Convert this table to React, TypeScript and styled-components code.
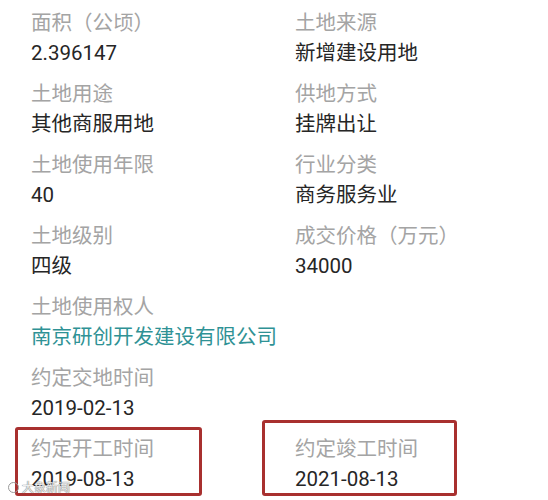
import React from 'react';
import styled, { createGlobalStyle } from 'styled-components';

const GlobalStyle = createGlobalStyle`
  body {
    margin: 0;
    background: #fff;
    font-family: Roboto, "Noto Sans CJK SC", sans-serif;
  }
`;

const Page = styled.div`
  position: relative;
  width: 548px;
  height: 500px;
  overflow: hidden;
  background: #fff;
  padding: 8.5px 0 0 31px;
  box-sizing: border-box;
`;

const Grid = styled.div`
  display: grid;
  grid-template-columns: 264px 1fr;
  row-gap: 12px;
`;

const Item = styled.div<{ $full?: boolean }>`
  position: relative;
  grid-column: ${(p) => (p.$full ? '1 / -1' : 'auto')};
`;

const Label = styled.div`
  font-size: 20.5px;
  line-height: 29px;
  color: #a4a4a4;
  white-space: nowrap;
`;

const Value = styled.div<{ $link?: boolean }>`
  font-size: 20.5px;
  line-height: 30px;
  color: ${(p) => (p.$link ? '#2f9295' : '#262626')};
  white-space: nowrap;
`;

// hand drawn red highlight boxes in the screenshot
const Highlight = styled.div<{ $left: number; $top: number; $width: number }>`
  position: absolute;
  left: ${(p) => p.$left}px;
  top: ${(p) => p.$top}px;
  width: ${(p) => p.$width}px;
  bottom: -2px;
  border: 3px solid #a8302f;
  border-radius: 3px;
  box-sizing: border-box;
  pointer-events: none;
`;

const Watermark = styled.div`
  position: absolute;
  left: 8px;
  bottom: 6px;
  display: flex;
  align-items: center;
  gap: 3px;
  font-size: 12px;
  line-height: 14px;
  color: #eee;
  text-shadow: 0 0 1px #777, 0 0 1px #777;
  font-family: "Noto Sans CJK SC", sans-serif;
`;

const Dot = styled.span`
  width: 11px;
  height: 11px;
  border-radius: 50%;
  border: 1.5px solid #999;
  box-sizing: border-box;
`;

type Field = {
  label: string;
  value: string;
  full?: boolean;
  link?: boolean;
  box?: { left: number; top: number; width: number };
};

const fields: Field[] = [
  { label: '面积（公顷）', value: '2.396147' },
  { label: '土地来源', value: '新增建设用地' },
  { label: '土地用途', value: '其他商服用地' },
  { label: '供地方式', value: '挂牌出让' },
  { label: '土地使用年限', value: '40' },
  { label: '行业分类', value: '商务服务业' },
  { label: '土地级别', value: '四级' },
  { label: '成交价格（万元）', value: '34000' },
  { label: '土地使用权人', value: '南京研创开发建设有限公司', full: true, link: true },
  { label: '约定交地时间', value: '2019-02-13', full: true },
  { label: '约定开工时间', value: '2019-08-13', box: { left: -16, top: -8, width: 187 } },
  { label: '约定竣工时间', value: '2021-08-13', box: { left: -33, top: -15, width: 195 } },
];

function App() {
  return (
    <Page>
      <GlobalStyle />
      <Grid>
        {fields.map((f) => (
          <Item key={f.label} $full={f.full}>
            <Label>{f.label}</Label>
            <Value $link={f.link}>{f.value}</Value>
            {f.box && <Highlight $left={f.box.left} $top={f.box.top} $width={f.box.width} />}
          </Item>
        ))}
      </Grid>
      <Watermark>
        <Dot />
        大象新闻
      </Watermark>
    </Page>
  );
}

export default App;
